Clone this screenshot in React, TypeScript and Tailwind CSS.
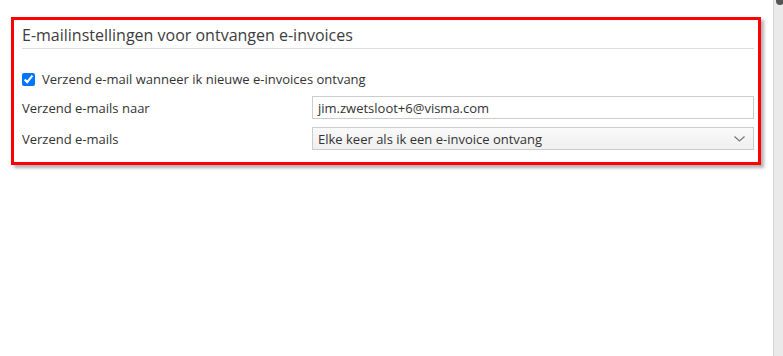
import React from "react";

export default function App() {
  return (
    <div
      className="flex h-[356px] w-[783px] bg-white text-[#333]"
      style={{ fontFamily: '"Open Sans", "Liberation Sans", sans-serif' }}
    >
      <div className="flex-1 pl-[11px] pt-[17px]">
        <div className="w-[750px] border-[3px] border-[#ff0000] bg-white pl-2 pr-[4px] pt-[4px] pb-[12px] shadow-[3px_3px_3px_rgba(0,0,0,0.3)]">
          <div className="border-b border-[#dddddd] pb-[2px] text-[16px] leading-[22px] text-[#3d3d3d]">
            E-mailinstellingen voor ontvangen e-invoices
          </div>
          <div className="mt-[21px] flex h-[18px] items-center text-[13px] leading-[18px]">
            <input
              type="checkbox"
              defaultChecked
              className="m-0 h-[13px] w-[13px] accent-[#0075ff]"
            />
            <span className="ml-[7px]">Verzend e-mail wanneer ik nieuwe e-invoices ontvang</span>
          </div>
          <div className="mt-[8px] flex items-center text-[13px] leading-[18px]">
            <div className="w-[290px]">Verzend e-mails naar</div>
            <div className="flex h-[23px] flex-1 items-center border border-[#cccccc] bg-white pl-[5px]">
              jim.zwetsloot+6@visma.com
            </div>
          </div>
          <div className="mt-[8px] flex items-center text-[13px] leading-[18px]">
            <div className="w-[290px]">Verzend e-mails</div>
            <div className="flex h-[23px] flex-1 items-center justify-between border border-[#cccccc] bg-gradient-to-b from-[#fafafa] to-[#efefef] pl-[5px] pr-[8px]">
              <span>Elke keer als ik een e-invoice ontvang</span>
              <svg width="11" height="6" viewBox="0 0 11 6" fill="none">
                <path d="M0.5 0.5 L5.5 5 L10.5 0.5" stroke="#777" strokeWidth="1.2" />
              </svg>
            </div>
          </div>
        </div>
      </div>
      <div className="relative w-[10px] border-l border-[#d4d4d4] bg-[#eaeaea]">
        <div className="absolute left-[2px] top-[-4px] h-[9px] w-[8px] rounded-[4px] bg-[#555]" />
      </div>
    </div>
  );
}
